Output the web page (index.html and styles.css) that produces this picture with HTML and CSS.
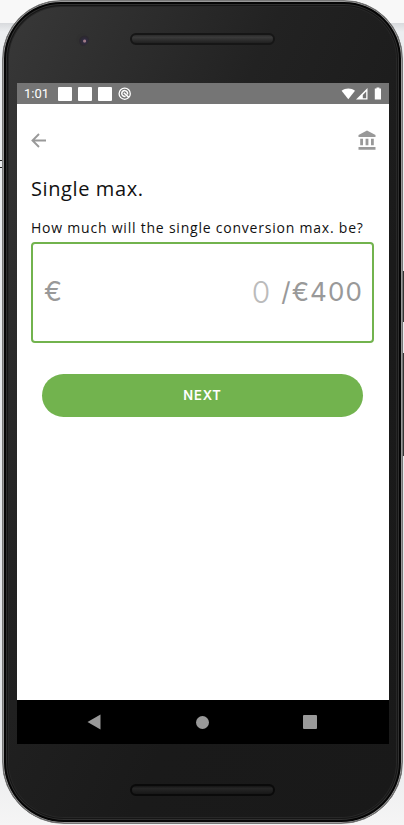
FILE: index.html
```html
<!DOCTYPE html>
<html lang="en">
<head>
<meta charset="utf-8">
<title>Single max.</title>
<link rel="stylesheet" href="styles.css">
</head>
<body>
<div class="phone">
  <div class="phone-top">
    <span class="camera"></span>
    <span class="speaker"></span>
  </div>
  <div class="screen">
    <div class="status">
      <span class="time">1:01</span>
      <span class="notice"></span><span class="notice"></span><span class="notice"></span>
      <svg class="sync" width="14" height="14" viewBox="0 0 14 14" fill="none" stroke="#fff"><circle cx="6.700" cy="6.700" r="5.600" stroke-width="1.300"/><path d="M7.500 9.300A2.900 2.900 0 1 1 9.400 7.500M5.800 5.800l5 4.600" stroke-width="1.500"/></svg>
      <svg class="signals" width="42" height="14" viewBox="0 0 42 14" fill="#fff"><path d="M.6 3.800C4.500.6 10.100.6 14 3.800L7.300 12.300z"/><path d="M26.500 1v11.500H15z"/><path d="M25.200 4.600v6.600h-3.400V8z" fill="#757575"/><path d="M33.800 1.600h1.700V.6h2.900v1h1.600v10.900h-6.200z"/></svg>
    </div>
    <main class="app">
      <header class="toolbar">
        <svg width="16" height="16" viewBox="0 0 16 16" fill="none" stroke="#999" stroke-width="1.900"><path d="M15 8.500H2M8 2L1.500 8.500L8 15"/></svg>
        <svg width="18" height="20" viewBox="0 0 18 20" fill="#999"><path d="M9 .5l8.500 4.400V7H.5V4.900zM2.200 8.800h2.800v6.400H2.200zM7.600 8.800h2.800v6.400H7.600zM13 8.800h2.800v6.400H13zM.5 17h17v2.700H.5z"/></svg>
      </header>
      <h1 class="title">Single max.</h1>
      <p class="question">How much will the single conversion max. be?</p>
      <div class="amount">
        <span class="currency">€</span>
        <span class="value">0</span>
        <span class="limit">/€400</span>
      </div>
      <button class="next">NEXT</button>
    </main>
    <nav class="nav">
      <svg width="14" height="16" viewBox="0 0 14 16" fill="#999"><path d="M.5 8L13.500 .6v14.800z"/></svg>
      <span class="home"></span>
      <span class="recent"></span>
    </nav>
  </div>
  <div class="phone-bottom"><span class="speaker"></span></div>
</div>
<span class="edge-mark"></span>
<span class="side-key power"></span>
<span class="side-key volume"></span>
</body>
</html>
```
FILE: styles.css
```css
* { box-sizing: border-box; }
body {
  margin: 0;
  width: 404px;
  height: 825px;
  overflow: hidden;
  position: relative;
  background: linear-gradient(#f8f8f8 0 23px, #d8dadd 23px, #eceef0 32px, #e2e4e7 700px, #f5f5f5);
  font-family: "Open Sans", sans-serif;
}
.phone {
  width: 401px;
  height: 824px;
  margin-left: 2px;
  border: 1px solid #777;
  border-radius: 59px 59px 62px 62px;
  background: linear-gradient(115deg, #393939, #222 36%, #1a1a1a 65%, #191919);
  box-shadow: inset 0 0 0 1px #999, inset 0 0 0 3px #050505, inset 0 0 0 4px #303030, inset 0 0 0 5px #161616, inset 0 0 0 6px #272727;
  display: flex;
  flex-direction: column;
}
.phone-top {
  height: 82px;
  display: flex;
  align-items: flex-start;
  padding: 32px 0 0 74px;
}
.camera {
  width: 13px;
  height: 13px;
  margin-left: -1px;
  border-radius: 50%;
  background: radial-gradient(circle at 66% 62%, #a07b88 0 1px, #302b40 2px, #2b282d 5px, #303030 6px);
}
.speaker {
  width: 145px;
  height: 12px;
  border: 2px solid #161616;
  border-radius: 6px;
  background: linear-gradient(#2b2b2b, #3a3a3a 30%, #202020);
}
.phone-top .speaker { margin-left: 41px; }
.screen {
  width: 372px;
  height: 661px;
  margin-left: 14px;
  background: #fff;
  display: flex;
  flex-direction: column;
}
.status {
  height: 21px;
  background: #757575;
  display: flex;
  align-items: center;
  padding: 0 6px 0 7px;
}
.time {
  width: 34px;
  font: 13px/20px Roboto, sans-serif;
  color: #fff;
}
.notice {
  width: 14px;
  height: 14px;
  margin-right: 6px;
  background: #fff;
  border-radius: 1px;
}
.signals { margin-left: auto; }
.app {
  flex: 1;
  padding: 0 14px;
}
.toolbar {
  display: flex;
  justify-content: space-between;
  align-items: center;
  padding-top: 26px;
  height: 46px;
  margin-right: -1px;
}
.title {
  margin: 25px 0 0;
  font-size: 20px;
  line-height: 28px;
  font-weight: 400;
  letter-spacing: .6px;
  color: #111;
  white-space: nowrap;
}
.question {
  margin: 15px 0 0;
  font-size: 14px;
  line-height: 20px;
  letter-spacing: .78px;
  color: #111;
  white-space: nowrap;
}
.amount {
  height: 101px;
  margin-top: 4px;
  width: 343px;
  border: 2px solid #72b34e;
  border-radius: 4px;
  display: flex;
  align-items: center;
  padding: 0 9px 1px 11px;
  font: 400 27px/40px Inter, sans-serif;
  color: #999;
}
.value {
  margin-left: auto;
  font-size: 30px;
  font-weight: 300;
  color: #bbb;
}
.limit {
  margin-left: 11px;
  font-size: 26px;
  letter-spacing: 1.1px;
}
.next {
  display: block;
  width: 321px;
  height: 43px;
  margin: 31px 0 0 11px;
  padding: 0;
  border: 0;
  border-radius: 22px;
  background: #72b34e;
  color: #fff;
  font: 600 13px/43px Inter, sans-serif;
  letter-spacing: .8px;
}
.nav {
  height: 44px;
  background: #000;
  display: flex;
  align-items: center;
  padding-left: 70px;
}
.home {
  width: 13px;
  height: 13px;
  margin-left: 95px;
  border-radius: 50%;
  background: #999;
}
.recent {
  width: 14px;
  height: 14px;
  margin-left: 94px;
  border-radius: 1px;
  background: #999;
}
.phone-bottom { padding: 40px 0 0 127px; }
.phone-bottom .speaker {
  display: block;
  background: linear-gradient(#151515, #262626 30%, #171717);
  border-color: #0a0a0a;
}
.edge-mark {
  position: absolute;
  left: 0;
  top: 160px;
  width: 2px;
  height: 8px;
  border: solid #222;
  border-width: 1px 0;
}
.side-key {
  position: absolute;
  right: 0;
  width: 1px;
  background: #333;
}
.power { top: 271px; height: 51px; }
.volume { top: 353px; height: 103px; }
```
